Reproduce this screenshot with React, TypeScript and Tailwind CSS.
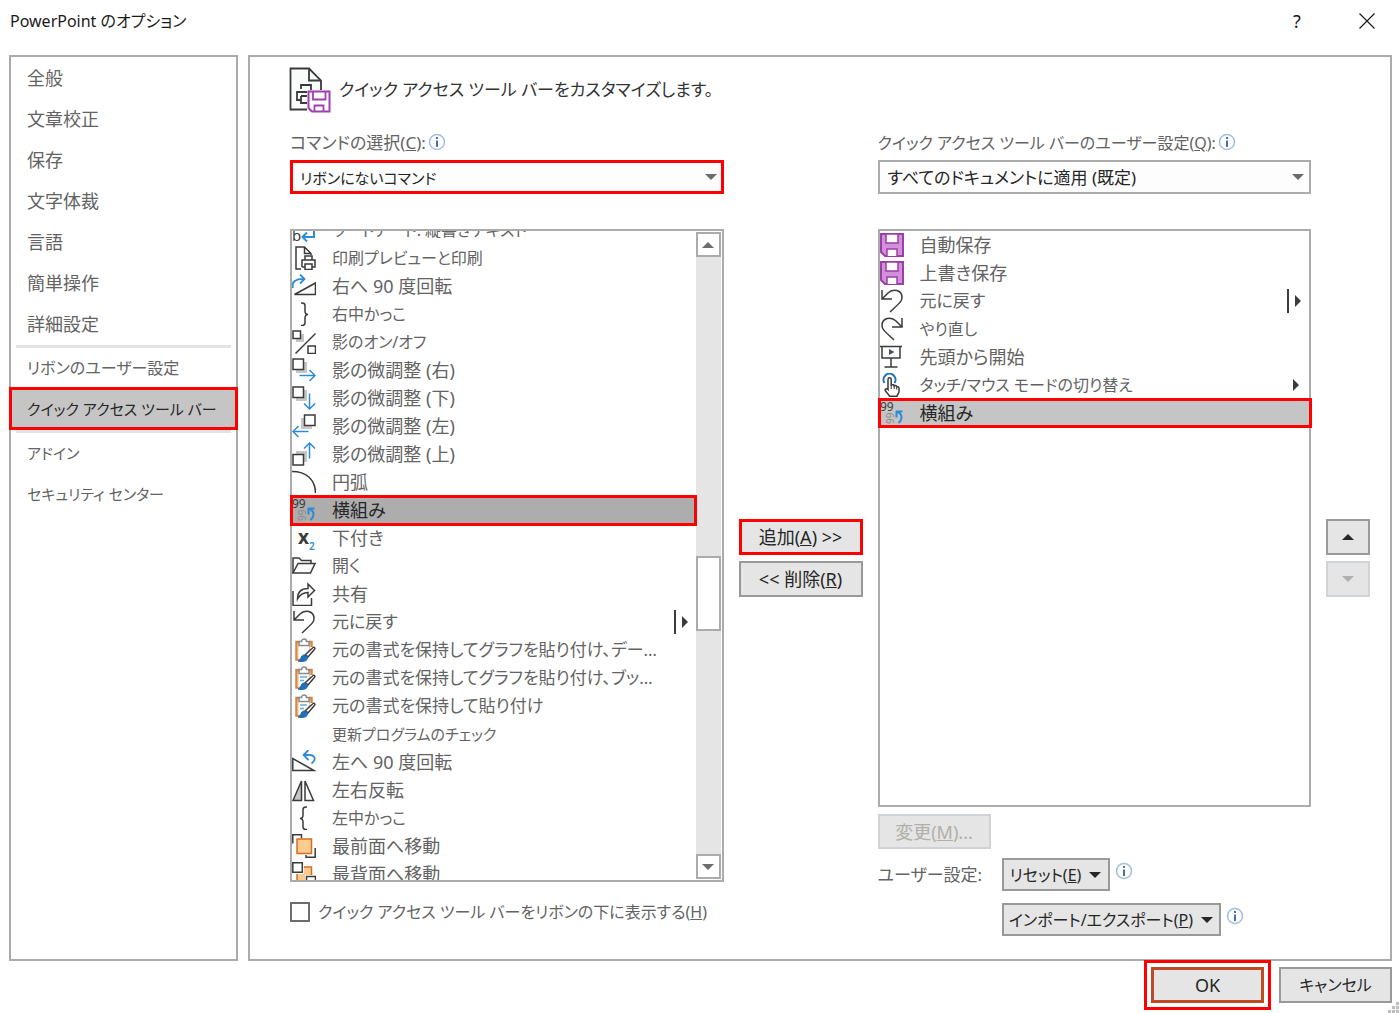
import { useLayoutEffect, useRef, useState } from 'react';
import type { ReactNode } from 'react';
import clsx from 'clsx';

interface Command {
  id: string;
  label: string;
  icon: ReactNode;
  menu?: 'split' | 'sub';
}

const INK = '#3b3b3b';
const BLUE = '#2e8bd6';
const SHADOW = '#c6c6c6';

function Icon({ children }: { children?: ReactNode }) {
  return (
    <svg width="24" height="24" viewBox="0 0 24 24" fill="none" stroke={INK} strokeWidth="1.5" className="shrink-0" aria-hidden="true">
      {children}
    </svg>
  );
}

const undoIcon = (
  <Icon>
    <path d="M2 1v9h10M2 10l6-6C13-1 22 1 22 8.500c0 4-2.500 5.500-12 14.500" />
  </Icon>
);

const saveIcon = (
  <Icon>
    <path d="M1 1h22v22H5l-4-4z" fill="#d48fda" stroke="#9a3fa8" strokeWidth="2" />
    <path d="M6 1h12v9H6z" fill="#fcfcfc" stroke="#9a3fa8" />
    <path d="M7 23v-7h10v7" fill="#fcfcfc" stroke="#9a3fa8" />
  </Icon>
);

const horizontalIcon = (
  <Icon>
    <text x="0" y="10" fontSize="12" fontWeight="400" fill={INK} stroke="none">99</text>
    <text transform="translate(14 23) rotate(-90)" fontSize="10" fontWeight="400" fill="#8c8c8c" stroke="none">99</text>
    <path d="M22.500 10.500H16M16.500 10v6.500M16.500 10.500c6 2 6.500 7.500 2 11.500" stroke={BLUE} strokeWidth="2" />
  </Icon>
);

function PasteIcon({ lines }: { lines?: boolean }) {
  return (
    <Icon>
      <path d="M7 4H4.500v17.500H9M17 4h2.500v5" stroke="#d98543" strokeWidth="2.500" />
      <path d="M6 5.500h11.500v6l-7 9.500H6z" fill="#fbfbfb" stroke="#f3c795" strokeWidth="1" />
      <path d="M7 7.500v-4h2.500a2.500 2.500 0 0 1 5 0H17v4z" fill="#fff" stroke="#8a8a8a" />
      {lines && <path d="M8 11h7M8 14.500h4" stroke="#6aa9dc" />}
      <path d="M22.500 9.500c1 1 0 2-1 3L16 19l-2.500-2.500 6.500-6c1-1 1.800-1.800 2.500-1z" fill="#fff" />
      <path d="M13 17c2 .5 3 2 2.500 3.500-1 3-5.500 3.500-9.500 2.500 3-1 2.500-3 4-5 .8-.8 2-1.200 3-1z" fill="#1d72bd" stroke="#1d5f9d" strokeWidth="1" />
    </Icon>
  );
}

const ribbonlessCommands: Command[] = [
  {
    id: 'wordart-vertical',
    label: 'ワードアート: 縦書きテキスト',
    icon: (
      <Icon>
        <text x="0" y="23" fontSize="15" fontWeight="400" fill={INK} stroke="none">b</text>
        <path d="M17 12h5v7H11M15 14.500L10.500 19l4.500 4.500" stroke={BLUE} strokeWidth="2" />
      </Icon>
    ),
  },
  {
    id: 'print-preview',
    label: '印刷プレビューと印刷',
    icon: (
      <Icon>
        <path d="M9 23H4V1h8.500L19 7.500V9M12.500 1v6.500H19" />
        <path d="M13 14v-4h7v4M10 21v-7h13v7h-3M10 21h3" />
        <path d="M13 18h7v5.500h-7z" fill="#fff" />
      </Icon>
    ),
  },
  {
    id: 'rotate-right',
    label: '右へ 90 度回転',
    icon: (
      <Icon>
        <path d="M2.500 20.500l21-11.500v11.500z" fill="#fafafa" />
        <path d="M1 14C-1 8 4 4.500 12.500 5M8 .5l4.500 4.500L8 9.500" stroke={BLUE} strokeWidth="1.800" />
      </Icon>
    ),
  },
  {
    id: 'right-brace',
    label: '右中かっこ',
    icon: (
      <Icon>
        <path d="M9 1h1c2 0 3 .8 3 2.500v5.500c0 2 1 3.500 3 3.500-2 0-3 1.500-3 3.500v5c0 1.700-1 2.500-3 2.500H9" />
      </Icon>
    ),
  },
  {
    id: 'shadow-toggle',
    label: '影のオン/オフ',
    icon: (
      <Icon>
        <path d="M4 4h8v8H4z" fill={SHADOW} stroke="none" />
        <path d="M1 1h7.500v7.500H1zM16 16h7.500v7.500H16z" fill="#fff" />
        <path d="M23.500 3.500l-20 20" />
      </Icon>
    ),
  },
  {
    id: 'shadow-right',
    label: '影の微調整 (右)',
    icon: (
      <Icon>
        <path d="M4 4h11v11H4z" fill={SHADOW} stroke="none" />
        <path d="M1 1h10.500v10.500H1z" fill="#fff" />
        <path d="M7.500 17.500H23M17.500 12l5.500 5.500-5.500 5.500" stroke={BLUE} />
      </Icon>
    ),
  },
  {
    id: 'shadow-down',
    label: '影の微調整 (下)',
    icon: (
      <Icon>
        <path d="M4 4h11v11H4z" fill={SHADOW} stroke="none" />
        <path d="M1 1h10.500v10.500H1z" fill="#fff" />
        <path d="M17.500 7.500V23M12 17.500l5.500 5.500 5.500-5.500" stroke={BLUE} />
      </Icon>
    ),
  },
  {
    id: 'shadow-left',
    label: '影の微調整 (左)',
    icon: (
      <Icon>
        <path d="M9 4h11v11H9z" fill={SHADOW} stroke="none" />
        <path d="M12.500 1H23v10.500H12.500z" fill="#fff" />
        <path d="M16.500 17.500H1M6.500 12L1 17.500 6.500 23" stroke={BLUE} />
      </Icon>
    ),
  },
  {
    id: 'shadow-up',
    label: '影の微調整 (上)',
    icon: (
      <Icon>
        <path d="M4 9h11v11H4z" fill={SHADOW} stroke="none" />
        <path d="M1 12.500h10.500V23H1z" fill="#fff" />
        <path d="M17.500 16.500V1M12 6.500L17.500 1 23 6.500" stroke={BLUE} />
      </Icon>
    ),
  },
  { id: 'arc', label: '円弧', icon: <Icon><path d="M0 1.500c14 0 23.500 8 23.500 21.500" /></Icon> },
  { id: 'horizontal', label: '横組み', icon: horizontalIcon },
  {
    id: 'subscript',
    label: '下付き',
    icon: (
      <Icon>
        <text x="6" y="18" fontSize="19" fontWeight="700" fill={INK} stroke="none">x</text>
        <text x="17" y="24" fontSize="10" fontWeight="600" fill={BLUE} stroke="none">2</text>
      </Icon>
    ),
  },
  {
    id: 'open',
    label: '開く',
    icon: (
      <Icon>
        <path d="M1 19V4h6l2.500 2.500H19v3" />
        <path d="M1 19L6 9.500h17L18.500 19z" fill="#fafafa" />
      </Icon>
    ),
  },
  {
    id: 'share',
    label: '共有',
    icon: (
      <Icon>
        <path d="M1 9v14.500h18.500V16" />
        <path d="M5.500 17C5.500 9.500 10 6.500 16 6.500V2l6.500 6.500L16 15v-4.500c-4.500 0-8 2-10.500 6.500z" fill="#fafafa" />
      </Icon>
    ),
  },
  { id: 'undo', label: '元に戻す', icon: undoIcon, menu: 'split' },
  { id: 'paste-chart-data', label: '元の書式を保持してグラフを貼り付け、デー…', icon: <PasteIcon /> },
  { id: 'paste-chart-book', label: '元の書式を保持してグラフを貼り付け、ブッ…', icon: <PasteIcon lines /> },
  { id: 'paste-keep', label: '元の書式を保持して貼り付け', icon: <PasteIcon lines /> },
  { id: 'update-check', label: '更新プログラムのチェック', icon: <Icon /> },
  {
    id: 'rotate-left',
    label: '左へ 90 度回転',
    icon: (
      <Icon>
        <path d="M.8 8.500v12H22z" fill="#fafafa" />
        <path d="M16.500 0l-5 5 5 5M12 5h5c6 0 8 4.500 2.500 8.500" stroke={BLUE} strokeWidth="1.800" />
      </Icon>
    ),
  },
  {
    id: 'flip-horizontal',
    label: '左右反転',
    icon: (
      <Icon>
        <path d="M9.500 3v19.500H1z" fill={SHADOW} />
        <path d="M13 3v19.500h8.500z" fill="#fff" />
      </Icon>
    ),
  },
  {
    id: 'left-brace',
    label: '左中かっこ',
    icon: (
      <Icon>
        <path d="M15 1h-1c-2 0-3 .8-3 2.500v5.500c0 2-1 3.500-3 3.500 2 0 3 1.500 3 3.500v5c0 1.700 1 2.500 3 2.500h1" />
      </Icon>
    ),
  },
  {
    id: 'bring-front',
    label: '最前面へ移動',
    icon: (
      <Icon>
        <path d="M.8 9.500V.8h8.700V4M23.200 14v9.200H14V21" />
        <path d="M5 5h14.500v14.500H5z" fill="#fbcb90" stroke="#d56f1f" />
      </Icon>
    ),
  },
  {
    id: 'send-back',
    label: '最背面へ移動',
    icon: (
      <Icon>
        <path d="M5 5h14.500v14.500H5z" fill="#fbcb90" stroke="#d56f1f" />
        <path d="M-1-1h13v13H-1zM13 13h12v12H13z" fill="#fff" stroke="none" />
        <path d="M.8.8h9.500v9.500H.8zM14.500 14.500h9v9h-9z" fill="#fff" />
      </Icon>
    ),
  },
];

const toolbarCommands: Command[] = [
  { id: 'autosave', label: '自動保存', icon: saveIcon },
  { id: 'save', label: '上書き保存', icon: saveIcon },
  { id: 'undo', label: '元に戻す', icon: undoIcon, menu: 'split' },
  {
    id: 'redo',
    label: 'やり直し',
    icon: (
      <Icon>
        <path d="M22 1v9H12M22 10l-6-6C11-1 2 1 2 8.500c0 4 2.500 5.500 12 14.500" />
      </Icon>
    ),
  },
  {
    id: 'slideshow',
    label: '先頭から開始',
    icon: (
      <Icon>
        <path d="M0 1.500h22M2 1.500V13h18V1.500M11 13v9M4.500 22h13" />
        <path d="M9 4l5.500 3L9 10z" fill="#44546a" stroke="none" />
      </Icon>
    ),
  },
  {
    id: 'touch-mode',
    label: 'タッチ/マウス モードの切り替え',
    menu: 'sub',
    icon: (
      <Icon>
        <path d="M4.500 10a6 6 0 1 1 10 0" stroke="#1d72bd" strokeWidth="2" />
        <path d="M8 16.500V6.500c0-2.300 3.200-2.300 3.200 0V12c2-.8 3 0 3 .8 1.500-.6 2.500.2 2.500 1 1.500-.4 2.300.2 2.300 1.400v3c0 2-1.500 3-2 5H9.500c-.8-2-3-3.500-4.500-6 .5-2 2-1.800 3-.7z" fill="#fff" />
        <path d="M11.200 12v4M14.200 13v3M16.700 14v2.500" strokeWidth="1" />
      </Icon>
    ),
  },
  { id: 'horizontal', label: '横組み', icon: horizontalIcon },
];

const navGroups = [
  ['全般', '文章校正', '保存', '文字体裁', '言語', '簡単操作', '詳細設定'],
  ['リボンのユーザー設定', 'クイック アクセス ツール バー'],
  ['アドイン', 'セキュリティ センター'],
];

function textSize(label: string) {
  const chars = label.replace(/ /g, '');
  const share = (chars.match(/[\u3041-\u30ff]/g) ?? []).length / chars.length;
  if (share > 0.82) return 'text-[15px]';
  if (share >= 0.6) return 'text-[16px]';
  if (share > 0.35) return 'text-[17px]';
  return 'text-[18px]';
}

function Triangle({ dir, className }: { dir: 'up' | 'down' | 'right'; className?: string }) {
  const d = { up: 'M0 6l6-6 6 6z', down: 'M0 0h12L6 6z', right: 'M0 0l6 6-6 6z' }[dir];
  return (
    <svg width={dir === 'right' ? 6 : 12} height={dir === 'right' ? 12 : 6} fill="currentColor" className={clsx('shrink-0', className)} aria-hidden="true">
      <path d={d} />
    </svg>
  );
}

function InfoIcon({ className }: { className: string }) {
  return (
    <svg width="18" height="18" viewBox="0 0 18 18" className={clsx('shrink-0', className)} role="img" aria-label="情報">
      <circle cx="9" cy="9" r="7.500" fill="#fff" stroke="#a3bedd" strokeWidth="1.500" />
      <path d="M8 4h2v2H8zM8 7.500h2V14H8z" fill="#4a6fae" />
    </svg>
  );
}

// Red frame around the item that the user has to click
function Frame({ className }: { className: string }) {
  return <span className={clsx('absolute border-3 border-[#ff0000] pointer-events-none', className)} />;
}

function SelectBox({ id, options, marked }: { id: string; options: string[]; marked?: boolean }) {
  return (
    <div className="relative mt-[3px]">
      <select
        id={id}
        className={clsx(
          'block w-full h-[34px] appearance-none bg-[#fdfdfd] pt-0.5 pr-8 text-[#262626] outline-none',
          marked ? 'border-3 border-[#ff0000] pl-[7px] text-[15px]' : 'border-2 border-[#ababab] pl-2 text-[17px]'
        )}
      >
        {options.map(o => <option key={o}>{o}</option>)}
      </select>
      <Triangle dir="down" className="absolute right-[7px] top-3.5 text-[#6d6d6d] pointer-events-none" />
    </div>
  );
}

function CommandRow({ cmd, selected, onSelect, rowClass, frameClass }: {
  cmd: Command;
  selected: boolean;
  onSelect: () => void;
  rowClass: string;
  frameClass: string;
}) {
  return (
    <li
      role="option"
      aria-selected={selected}
      onClick={onSelect}
      className={clsx('relative flex items-center h-7 gap-4 pr-2 cursor-default', selected && rowClass)}
    >
      {cmd.icon}
      <span className={clsx('flex-1 truncate', textSize(cmd.label), selected && 'text-[#262626]')}>{cmd.label}</span>
      {cmd.menu === 'split' && (
        <span className="flex items-center gap-1.5 text-[#3b3b3b]">
          <span className="w-0.5 h-6 bg-current" />
          <Triangle dir="right" />
        </span>
      )}
      {cmd.menu === 'sub' && <Triangle dir="right" className="mr-0.5 text-[#3b3b3b]" />}
      {selected && <Frame className={frameClass} />}
    </li>
  );
}

const button = 'flex items-center justify-center bg-[#e5e5e5] border-2 border-[#999999] text-[#262626] whitespace-nowrap';

export default function App() {
  const [page, setPage] = useState('クイック アクセス ツール バー');
  const [command, setCommand] = useState('horizontal');
  const [item, setItem] = useState('horizontal');
  const listRef = useRef<HTMLUListElement>(null);

  useLayoutEffect(() => {
    if (listRef.current) listRef.current.scrollTop = 15;
  }, []);

  return (
    <div className="flex flex-col h-screen bg-white text-[18px] leading-6 text-[#636363] font-['Noto_Sans','Noto_Sans_CJK_JP',sans-serif] [font-feature-settings:'palt'] font-normal">
      {/* Title bar */}
      <header className="flex items-center h-[55px] shrink-0 pl-2.5 pr-6 pb-3.5 text-[#1a1a1a]">
        <h1 className="flex-1 text-[16px]">PowerPoint のオプション</h1>
        <button aria-label="ヘルプ" className="w-6 mr-[50px] text-center">?</button>
        <button aria-label="閉じる">
          <svg width="16" height="16" stroke="currentColor" strokeWidth="1.200" aria-hidden="true">
            <path d="M.5.5l15 15M15.500.5l-15 15" />
          </svg>
        </button>
      </header>

      <div className="flex flex-1 min-h-0 gap-2.5 pl-[9px] pr-[7px]">
        {/* Categories */}
        <nav className="w-[229px] shrink-0 border-2 border-[#ababab] pt-px">
          {navGroups.map((group, i) => (
            <div key={i}>
              {i > 0 && <hr className="mx-[5px] border-0 h-[3px] bg-[#e3e3e3]" />}
              {group.map(name => (
                <button
                  key={name}
                  onClick={() => setPage(name)}
                  className={clsx(
                    'relative block w-full h-[41px] px-4 pb-0.5 text-left whitespace-nowrap',
                    textSize(name),
                    page === name && 'bg-[#c5c5c5] text-[#262626]'
                  )}
                >
                  {name}
                  {page === name && <Frame className="-inset-x-0.5 -top-0.5 bottom-0" />}
                </button>
              ))}
            </div>
          ))}
        </nav>

        <main className="flex flex-col flex-1 min-w-0 border-2 border-[#ababab] pt-2.5 pl-10 pr-5">
          <div className="flex items-center gap-2 h-[46px] shrink-0 text-[#333333]">
            <svg width="42" height="46" viewBox="0 0 42 46" fill="none" stroke={INK} strokeWidth="1.800" className="-ml-px" aria-hidden="true">
              <path d="M18 42.500H1.500v-41H20L32 13.500V23" fill="#fafcfb" />
              <path d="M20 1.500v12h12" />
              <path d="M12 22v-4h10v5M18 25H8v8h4M12 29h6M12 29v7h6" />
              <path d="M19.500 24.500h21v20H23l-3.500-3.500z" fill="#fff" stroke="#a23fb0" strokeWidth="2" />
              <path d="M24 25v7.500h12.500V25M25.500 44v-5.500h9V44" stroke="#a23fb0" />
            </svg>
            <h2 className="text-[17px]">クイック アクセス ツール バーをカスタマイズします。</h2>
          </div>

          <div className="flex flex-1 min-h-0 gap-[15px] mt-4">
            {/* Available commands */}
            <section className="flex flex-col flex-1 min-w-0">
              <div className="flex items-center h-7 gap-0.5">
                <label htmlFor="source" className="text-[17px]">コマンドの選択(<u>C</u>):</label>
                <InfoIcon className="mb-0.5" />
              </div>
              <SelectBox id="source" options={['リボンにないコマンド', '基本的なコマンド', 'すべてのコマンド']} marked />

              <div className="flex flex-1 min-h-0 mt-[35px] border-2 border-[#ababab]">
                <ul ref={listRef} role="listbox" aria-label="コマンド" className="flex-1 min-w-0 -ml-0.5 pl-0.5 -mr-px pr-px z-10 overflow-hidden">
                  {ribbonlessCommands.map(c => (
                    <CommandRow
                      key={c.id}
                      cmd={c}
                      selected={command === c.id}
                      onSelect={() => setCommand(c.id)}
                      rowClass="bg-[#adadad]"
                      frameClass="-left-0.5 -right-px -top-px -bottom-0.5"
                    />
                  ))}
                </ul>
                <div className="flex flex-col w-[25px] mr-px my-px bg-[#e5e5e5]">
                  <button aria-label="上へスクロール" className="flex items-center justify-center h-[25px] shrink-0 border-2 border-[#ababab] bg-white text-[#6d6d6d]">
                    <Triangle dir="up" />
                  </button>
                  <div className="basis-[299px]" />
                  <div className="h-[75px] shrink-0 border-2 border-[#ababab] bg-white" />
                  <div className="flex-1" />
                  <button aria-label="下へスクロール" className="flex items-center justify-center h-[25px] shrink-0 border-2 border-[#ababab] bg-white text-[#6d6d6d]">
                    <Triangle dir="down" />
                  </button>
                </div>
              </div>

              <div className="flex items-center gap-2 h-7 mt-4 mb-[33px]">
                <input id="below" type="checkbox" className="w-5 h-5 shrink-0 appearance-none border-2 border-[#6d6d6d] bg-white checked:bg-[#6d6d6d]" />
                <label htmlFor="below" className="text-[16px] whitespace-nowrap">クイック アクセス ツール バーをリボンの下に表示する(<u>H</u>)</label>
              </div>
            </section>

            <div className="flex flex-col justify-center gap-1.5 w-[124px] shrink-0 pt-7">
              <button className="flex items-center justify-center h-9 bg-[#e5e5e5] border-3 border-[#ff0000] text-[#262626] whitespace-pre">追加(<u>A</u>) &gt;&gt;</button>
              <button className={clsx(button, 'h-9 whitespace-pre')}>&lt;&lt; 削除(<u>R</u>)</button>
            </div>

            {/* Current toolbar */}
            <section className="flex flex-col flex-1 min-w-0">
              <div className="flex items-center h-7 gap-0.5">
                <label htmlFor="target" className="text-[16px]">クイック アクセス ツール バーのユーザー設定(<u>Q</u>):</label>
                <InfoIcon className="mb-0.5" />
              </div>
              <SelectBox id="target" options={['すべてのドキュメントに適用 (既定)']} />

              <ul role="listbox" aria-label="ツール バー" className="flex-1 min-h-0 mt-[35px] border-2 border-[#ababab]">
                {toolbarCommands.map(c => (
                  <CommandRow
                    key={c.id}
                    cmd={c}
                    selected={item === c.id}
                    onSelect={() => setItem(c.id)}
                    rowClass="bg-[#c5c5c5]"
                    frameClass="-left-0.5 -right-[3px] -inset-y-px"
                  />
                ))}
              </ul>

              <button disabled className="self-start w-[113px] h-[35px] mt-[7px] bg-[#e5e5e5] border-2 border-[#d0d3d6] text-[#b0b0a8]">変更(<u>M</u>)...</button>
              <div className="grid grid-cols-[124px_auto] justify-start items-center gap-y-3 mt-[9px] mb-[23px]">
                <span className="text-[17px]">ユーザー設定:</span>
                <div className="flex items-center gap-[5px]">
                  <button className={clsx(button, 'w-[108px] h-[33px] text-[16px]')}>
                    リセット(<u>E</u>)<Triangle dir="down" className="ml-2" />
                  </button>
                  <InfoIcon className="mb-2" />
                </div>
                <div className="col-start-2 flex items-center gap-[5px]">
                  <button className={clsx(button, 'w-[219px] h-[33px] text-[16px]')}>
                    インポート/エクスポート(<u>P</u>)<Triangle dir="down" className="ml-2" />
                  </button>
                  <InfoIcon className="mb-2" />
                </div>
              </div>
            </section>

            <div className="flex flex-col justify-center gap-1.5 w-11 shrink-0 pt-7">
              <button aria-label="上へ" className={clsx(button, 'h-9')}><Triangle dir="up" /></button>
              <button aria-label="下へ" disabled className="flex items-center justify-center h-9 bg-[#e5e5e5] border-2 border-[#d0d3d6] text-[#b0b0b0]"><Triangle dir="down" /></button>
            </div>
          </div>
        </main>
      </div>

      <footer className="relative flex justify-end gap-[15px] h-[52px] shrink-0 pt-1.5 pr-[7px]">
        <button className="w-[113px] h-9 bg-[#e5e5e5] border-3 border-[#bf4b24] outline-3 outline-offset-4 outline-[#ff0000] text-[#262626]">OK</button>
        <button className={clsx(button, 'w-[113px] h-9 text-[16px]')}>キャンセル</button>
        <svg width="12" height="12" fill="#bdbdbd" className="absolute right-0 bottom-0" aria-hidden="true">
          <path d="M9 1h3v3H9zM5 5h3v3H5zM9 5h3v3H9zM1 9h3v3H1zM5 9h3v3H5zM9 9h3v3H9z" />
        </svg>
      </footer>
    </div>
  );
}
